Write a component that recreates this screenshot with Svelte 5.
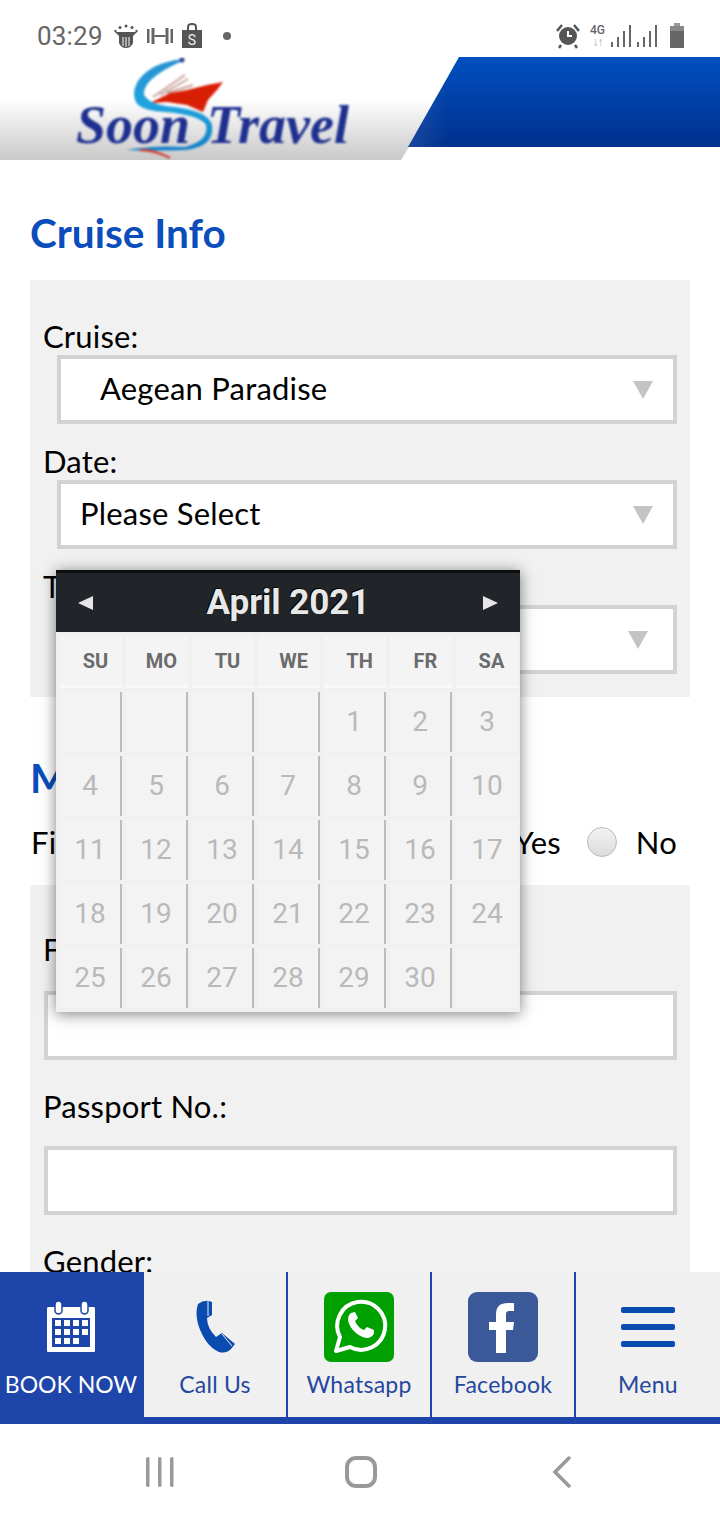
<script>
  const weekdays = ['SU', 'MO', 'TU', 'WE', 'TH', 'FR', 'SA'];
  // April 2021 starts on a Thursday
  const days = [null, null, null, null];
  for (let d = 1; d <= 30; d++) days.push(d);
  days.push(null);
  const tabs = ['Call Us', 'Whatsapp', 'Facebook', 'Menu'];
</script>

<div class="screen">
  <div class="statusbar">
    <span class="time">03:29</span>
    <svg class="ic" width="24" height="24" viewBox="0 0 24 24" fill="#555"><circle cx="12" cy="2" r="1.5"/><circle cx="6" cy="3.5" r="1.5"/><circle cx="18" cy="3.5" r="1.5"/><circle cx="1.5" cy="7" r="1.2"/><circle cx="22.5" cy="7" r="1.2"/><path d="M1 8 H23 L19 12 V19 Q17 24 12 24 Q7 24 5 19 V12Z"/><path d="M9 13 V22 M12 13 V23 M15 13 V22" stroke="#fff" stroke-width="1"/></svg>
    <svg class="ic" width="26" height="24" viewBox="0 0 26 24" fill="#666"><rect x="0" y="5" width="2.5" height="14"/><rect x="4.5" y="4" width="3" height="16"/><rect x="7.5" y="11" width="11" height="2"/><rect x="18.5" y="4" width="3" height="16"/><rect x="23.5" y="5" width="2.5" height="14"/></svg>
    <svg class="ic" width="20" height="26" viewBox="0 0 20 26"><path d="M0 7 H20 V25 H0Z" fill="#555"/><path d="M6 8 V4 Q6 1 10 1 Q14 1 14 4 V8" fill="none" stroke="#555" stroke-width="2"/><text x="10" y="22" text-anchor="middle" font-size="14" fill="#eee" font-family="Roboto">S</text></svg>
    <span class="dot"></span>
    <span class="status-right">
      <svg class="alarm" width="24" height="26" viewBox="0 0 24 26" fill="none" stroke="#555"><circle cx="12" cy="13" r="8" fill="#555" stroke-width="2"/><path d="M12 8 V13 H16" stroke="#fff" stroke-width="2"/><path d="M1 8 L6 2 M23 8 L18 2 M5 22 L3 25 M19 22 L21 25" stroke-width="2.5"/></svg>
      <span class="net">4G<i>↓↑</i></span>
      <svg width="21" height="24" viewBox="0 0 21 24" fill="#666"><rect x="0" y="18" width="2" height="5"/><rect x="6" y="13" width="2" height="10"/><rect x="12" y="7" width="2" height="16"/><rect x="18" y="1" width="2" height="22"/></svg>
      <svg width="21" height="24" viewBox="0 0 21 24" fill="#666"><rect x="0" y="18" width="2" height="5"/><rect x="6" y="13" width="2" height="10"/><rect x="12" y="7" width="2" height="16"/><rect x="18" y="1" width="2" height="22"/></svg>
      <svg class="batt" width="14" height="26" viewBox="0 0 14 26" fill="#666"><rect x="4" y="0" width="6" height="3" fill="#999"/><rect x="0" y="3" width="14" height="5" fill="#888"/><rect x="0" y="8" width="14" height="17"/></svg>
    </span>
  </div>

  <div class="content">
    <header>
      <div class="fade"></div>
      <svg class="logo" width="310" height="103" viewBox="0 0 310 103">
        <defs>
          <linearGradient id="swoosh" x1="0" y1="0" x2="0" y2="1">
            <stop offset="0" stop-color="#2a8fd0"/>
            <stop offset="0.5" stop-color="#1fa4de"/>
            <stop offset="1" stop-color="#1280c8"/>
          </linearGradient>
        </defs>
        <g class="soft">
          <path d="M93 40 L125 18 M100 38 L128 22 M107 36 L133 28" stroke="#c9a09a" stroke-width="2" fill="none"/>
          <path d="M90 46 L110 36 L127 33 L147 28 L163 25 L157 33 L148 43 L143 55 L127 48 L107 45Z" fill="#d91e06"/>
          <path d="M122 2 Q90 6 78 24 Q70 38 78 48 Q86 54 105 55 Q140 58 146 68 Q149 84 125 90 Q95 88 66 93 Q95 94 125 93 Q155 90 152 68 Q148 54 115 50 Q90 48 84 38 Q82 22 122 4Z" fill="url(#swoosh)"/>
          <path d="M80 93 Q95 93 110 101" stroke="#d2423a" stroke-width="2.5" fill="none"/>
          <circle cx="122" cy="3" r="2.5" fill="#27408f"/>
          <text x="16" y="86" class="logotext">Soon</text>
          <text x="147" y="86" class="logotext">Travel</text>
        </g>
      </svg>
      <div class="blue"></div>
    </header>

    <main>
      <h1>Cruise Info</h1>
      <section class="panel first">
        <div class="label">Cruise:</div>
        <div class="select indent">Aegean Paradise<span class="caret"></span></div>
        <div class="label next">Date:</div>
        <div class="select">Please Select<span class="caret"></span></div>
        <div class="label next">Time:</div>
        <div class="select">Please Select<span class="caret shifted"></span></div>
      </section>

      <h1 class="second">Main Passenger</h1>
      <div class="radio-row">
        <span>First Time Cruise?</span>
        <span class="radios">
          <input type="radio" name="first" aria-label="Yes" /><span>Yes</span>
          <input type="radio" name="first" aria-label="No" class="no" /><span>No</span>
        </span>
      </div>

      <section class="panel person">
        <div class="label">Full Name:</div>
        <input type="text" />
        <div class="label next">Passport No.:</div>
        <input type="text" />
        <div class="label next">Gender:</div>
      </section>
    </main>
  </div>

  <div class="calendar">
    <div class="cal-title">
      <span class="arrow left"></span>
      <span>April 2021</span>
      <span class="arrow right"></span>
    </div>
    <div class="cal-grid">
      {#each weekdays as w}
        <div class="wd">{w}</div>
      {/each}
      {#each days as d, i}
        <div class="day" class:last={i % 7 === 6}>{d ?? ''}</div>
      {/each}
    </div>
  </div>

  <nav class="tabbar">
    <a class="tab book" href="#book">
      <svg width="50" height="52" viewBox="0 0 50 52">
        <path d="M2 6 H48 Q49 6 49 8 V50 Q49 51 48 51 H2 Q1 51 1 50 V8 Q1 6 2 6Z" fill="#fff"/>
        <rect x="6" y="17" width="38" height="29" fill="#1e45aa"/>
        <rect x="9" y="0" width="7" height="13" rx="3.5" fill="#fff" stroke="#1e45aa" stroke-width="1.5"/>
        <rect x="35" y="0" width="7" height="13" rx="3.5" fill="#fff" stroke="#1e45aa" stroke-width="1.5"/>
        <g fill="#fff">
          {#each [0, 1, 2] as r}
            {#each [0, 1, 2, 3] as c}
              {#if !(r === 2 && c === 3)}
                <rect x={9 + c * 9} y={19 + r * 9} width="6" height="6"/>
              {/if}
            {/each}
          {/each}
        </g>
      </svg>
      <span>BOOK NOW</span>
    </a>
    {#each tabs as t}
      <a class="tab" href="#{t}">
        {#if t === 'Call Us'}
          <svg width="41" height="54" viewBox="0 0 41 54">
            <path d="M3 4 Q8 0 14 1 L17 2 V15 L12 18 Q12 28 21 37 L27 33 L40 44 L36 49 Q31 54 24 52 Q10 46 3 24 Q0 12 3 4Z" fill="#0a4bb0"/>
            <path d="M13 1 V16 M27 34 L37 46" stroke="#f0f0f0" stroke-width="1" fill="none"/>
          </svg>
        {:else if t === 'Whatsapp'}
          <svg width="70" height="70" viewBox="0 0 70 70">
            <rect width="70" height="70" rx="7" fill="#00a000"/>
            <path d="M12 59 L16 45 A24 24 0 1 1 26 55 Z" fill="none" stroke="#fff" stroke-width="4" stroke-linejoin="round"/>
            <path d="M27 21 Q24 23 24 28 Q25 35 32 41 Q38 46 44 46 Q49 45 50 41 L50 38 L43 35 L40 38 Q34 36 31 29 L34 26 L31 20 Z" fill="#fff"/>
          </svg>
        {:else if t === 'Facebook'}
          <svg width="70" height="70" viewBox="0 0 70 70">
            <rect width="70" height="70" rx="9" fill="#3b5998"/>
            <path d="M28 61 V38 H21 V30 H28 V22 Q28 11 40 11 H46 V19 H41 Q38 19 38 22 V30 H46 L45 38 H38 V61Z" fill="#fff"/>
          </svg>
        {:else}
          <div class="burger"><i></i><i></i><i></i></div>
        {/if}
        <span>{t}</span>
      </a>
    {/each}
  </nav>

  <div class="sysnav">
    <svg width="30" height="32" viewBox="0 0 30 32" fill="#999"><rect x="1" y="1" width="3.5" height="30" rx="1.7"/><rect x="13" y="1" width="3.5" height="30" rx="1.7"/><rect x="25" y="1" width="3.5" height="30" rx="1.7"/></svg>
    <svg class="home" width="32" height="32" viewBox="0 0 32 32" fill="none" stroke="#999" stroke-width="4"><rect x="2" y="2" width="28" height="28" rx="9"/></svg>
    <svg width="20" height="32" viewBox="0 0 20 32" fill="none" stroke="#999" stroke-width="3.5" stroke-linecap="round"><path d="M17 2 L3 16 L17 30"/></svg>
  </div>
</div>

<style>
  :global(body) {
    margin: 0;
    background: #fff;
  }

  .screen {
    width: 720px;
    height: 1520px;
    display: flex;
    flex-direction: column;
    position: relative;
    overflow: hidden;
    font-family: Lato, "Open Sans", sans-serif;
    color: #000;
  }

  /* status bar */
  .statusbar {
    height: 57px;
    flex: none;
    display: flex;
    align-items: center;
    padding: 14px 36px 0 37px;
    box-sizing: border-box;
    background: #fff;
  }

  .time {
    font-family: Roboto, sans-serif;
    font-size: 26px;
    letter-spacing: 0.2px;
    color: #666;
    margin-right: 11px;
  }

  .ic {
    margin-right: 9px;
  }

  .dot {
    width: 8px;
    height: 8px;
    border-radius: 50%;
    background: #666;
    margin-left: 12px;
  }

  .status-right {
    margin-left: auto;
    display: flex;
    align-items: center;
    gap: 5px;
  }

  .alarm {
    margin-right: 5px;
  }

  .net {
    font-family: Roboto, sans-serif;
    font-size: 12px;
    font-weight: 500;
    line-height: 12px;
    color: #666;
    text-align: center;
    margin-right: 1px;
  }

  .net i {
    display: block;
    font-style: normal;
    color: #aaa;
    letter-spacing: -1px;
  }

  .batt {
    margin-left: 7px;
  }

  /* header */
  .content {
    flex: 1;
    min-height: 0;
    overflow: hidden;
  }

  header {
    height: 103px;
    position: relative;
    display: flex;
  }

  .fade {
    position: absolute;
    inset: 0;
    background: linear-gradient(to bottom, #fff 0, #fff 42px, #c9c9c9 100%);
    clip-path: polygon(0 0, 100% 0, 100% 90px, 409px 90px, 401px 100%, 0 100%);
  }

  .logo {
    position: relative;
    margin-left: 60px;
  }

  .soft {
    filter: blur(0.8px);
  }

  .logotext {
    font-family: "Liberation Serif", serif;
    font-style: italic;
    font-weight: bold;
    font-size: 54px;
    fill: #1e2f8f;
  }

  .blue {
    position: relative;
    margin-left: auto;
    width: 312px;
    height: 90px;
    background:
      linear-gradient(to right, rgba(255, 255, 255, 0.1), transparent 40px),
      linear-gradient(to bottom, #0050bf, #00308e);
    clip-path: polygon(51px 0, 100% 0, 100% 100%, 0 100%);
  }

  /* form */
  main {
    padding: 0 30px;
  }

  h1 {
    margin: 48px 0 22px;
    font-size: 40.5px;
    line-height: 50px;
    font-weight: 700;
    color: #0a4dbb;
  }

  h1.second {
    margin: 56px 0 21px;
  }

  .panel {
    background: #f1f1f1;
    padding: 39px 13px 23px 14px;
  }

  .panel.person {
    padding-top: 47px;
  }

  .label {
    font-size: 31px;
    letter-spacing: 0.2px;
    line-height: 34px;
    padding-bottom: 2px;
    margin-left: -1px;
  }

  .label.next {
    margin-top: 20px;
  }

  .person .label {
    margin-bottom: 23px;
  }

  .person .label.next {
    margin-top: 29px;
    margin-bottom: 21px;
  }

  .select {
    height: 69px;
    box-sizing: border-box;
    margin-left: 13px;
    border: 4px solid #d3d3d3;
    background: #fff;
    display: flex;
    align-items: center;
    padding: 0 0 3px 19px;
    font-size: 31px;
    letter-spacing: 0.2px;
    position: relative;
  }

  .select.indent {
    padding-left: 39px;
  }

  .caret {
    position: absolute;
    right: 20px;
    top: 22px;
    border-left: 10px solid transparent;
    border-right: 10px solid transparent;
    border-top: 18px solid #c4c4c4;
  }

  .caret.shifted {
    right: 25px;
  }

  input[type='text'] {
    display: block;
    width: 100%;
    height: 69px;
    box-sizing: border-box;
    border: 4px solid #d3d3d3;
    background: #fff;
    border-radius: 0;
    margin: 0;
    outline: none;
  }

  .radio-row {
    display: flex;
    justify-content: space-between;
    align-items: center;
    height: 36px;
    font-size: 31px;
    letter-spacing: 0.2px;
    margin: 0 13px 25px 1px;
  }

  .radios {
    display: flex;
    align-items: center;
    gap: 19px;
  }

  input[type='radio'] {
    appearance: none;
    width: 30px;
    height: 30px;
    margin: 0;
    border-radius: 50%;
    border: 1px solid #bbb;
    background: linear-gradient(to bottom, #f2f2f2, #dcdcdc);
  }

  .radios .no {
    margin-left: 7px;
  }

  /* datepicker */
  .calendar {
    position: absolute;
    left: 56px;
    top: 570px;
    width: 464px;
    height: 442px;
    background: #f0f0f0;
    box-shadow: 0 2px 14px rgba(0, 0, 0, 0.5);
    font-family: Roboto, sans-serif;
  }

  .cal-title {
    height: 62px;
    box-sizing: border-box;
    background: #212529;
    border-top: 3px solid #0d0f11;
    display: flex;
    align-items: center;
    justify-content: space-between;
    padding: 0 22px;
    font-size: 35px;
    font-weight: 700;
    color: #e8e8e8;
    text-shadow: -1px -1px 0 #000;
  }

  .arrow {
    border-top: 7px solid transparent;
    border-bottom: 7px solid transparent;
  }

  .arrow.left {
    border-right: 15px solid #e6e6e6;
  }

  .arrow.right {
    border-left: 15px solid #e6e6e6;
  }

  .cal-grid {
    display: grid;
    grid-template-columns: repeat(7, 62px);
    grid-template-rows: 52px repeat(5, 60px);
    gap: 4px;
    padding: 4px 2px 4px 4px;
  }

  .wd {
    background: #f4f4f4;
    border-bottom: 2px solid #f9f9f9;
    font-size: 20px;
    font-weight: 700;
    color: #6b6b6b;
    display: flex;
    align-items: center;
    justify-content: center;
    padding-left: 9px;
  }

  .day {
    background: #f3f3f3;
    border-right: 2px solid #bbb;
    color: #b9b9b9;
    font-size: 28px;
    display: flex;
    align-items: center;
    justify-content: center;
    padding-bottom: 2px;
    box-sizing: border-box;
  }

  .day.last {
    border-right: 0;
  }

  /* bottom links */
  .tabbar {
    height: 152px;
    flex: none;
    display: flex;
    background: #f0f0f0;
    border-bottom: 7px solid #1e45aa;
    box-sizing: border-box;
  }

  .tab {
    width: 144px;
    box-sizing: border-box;
    border-right: 2px solid #1e45aa;
    height: 145px;
    display: flex;
    flex-direction: column;
    align-items: center;
    justify-content: center;
    color: #24479f;
    font-size: 23px;
    letter-spacing: 0.25px;
    text-decoration: none;
  }

  .tab:last-child {
    border-right: 0;
  }

  .tab svg,
  .burger {
    height: 70px;
    margin-bottom: 8px;
  }

  .tab.book {
    background: #1e45aa;
    color: #fff;
    border-right: 0;
    letter-spacing: 0;
    padding-right: 2px;
  }

  .burger {
    width: 54px;
    display: flex;
    flex-direction: column;
    justify-content: center;
    gap: 11px;
  }

  .burger i {
    height: 6px;
    border-radius: 2px;
    background: #0a4bb0;
  }

  .sysnav {
    flex: none;
    height: 96px;
    background: #fff;
    display: flex;
    align-items: center;
    justify-content: space-between;
    padding: 0 148px 0 145px;
  }

  .home {
    margin-left: -6px;
  }
</style>
